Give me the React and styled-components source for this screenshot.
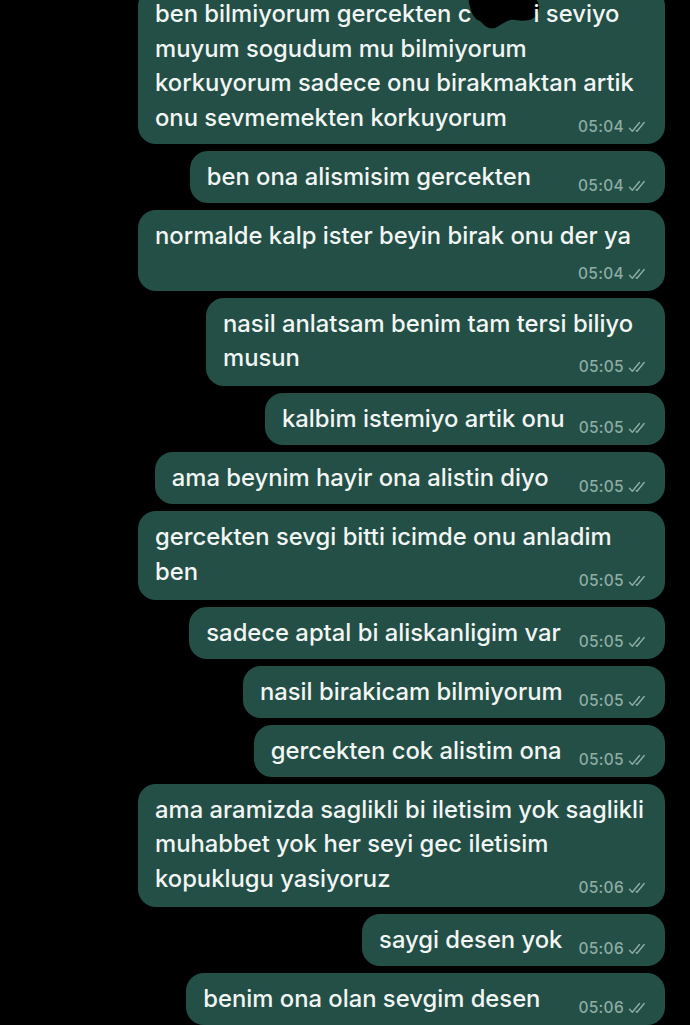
import styled, { createGlobalStyle } from "styled-components";

const GlobalStyle = createGlobalStyle`
  html, body {
    margin: 0;
    padding: 0;
    background: #000;
  }
  body {
    font-family: Inter, "Noto Sans", "Liberation Sans", sans-serif;
  }
`;

const Screen = styled.div`
  width: 690px;
  height: 1025px;
  overflow: hidden;
  background: #000;
`;

const List = styled.div`
  display: flex;
  flex-direction: column;
  align-items: flex-end;
  gap: 7px;
  margin-top: -12px;
  padding-right: 25px;
`;

const Bubble = styled.div`
  display: flow-root;
  box-sizing: border-box;
  max-width: 527px;
  width: ${(p) => (p.$w ? `${p.$w}px` : "auto")};
  padding: 9px 17px ${(p) => 8.5 + (p.$extra || 0)}px 17px;
  background: #234f46;
  border-radius: 18px;
  color: #f1f5f3;
  font-size: 23.8px;
  font-weight: 500;
  line-height: 34.5px;
  white-space: pre-line;
`;

const Meta = styled.span`
  float: right;
  display: flex;
  align-items: center;
  gap: 4px;
  margin-left: ${(p) => p.$gap || 14}px;
  margin-top: ${(p) => (p.$below ? 13 : 18)}px;
  font-size: 15.5px;
  font-weight: 500;
  line-height: 16px;
  color: #8eaca3;
  letter-spacing: 0.3px;
`;

const Redact = styled.svg`
  display: inline-block;
  vertical-align: top;
  width: 80px;
  height: 36px;
  margin: -4px -8px 0 -10px;
`;

const Ticks = () => (
  <svg width="20" height="12" viewBox="0 0 20 12" fill="none">
    <path
      d="M1.5 7.2 L4.3 10.3 L11.5 1.5"
      stroke="#8eaca3"
      strokeWidth="1.4"
      strokeLinecap="round"
      strokeLinejoin="round"
    />
    <path
      d="M8.2 9.6 L9 10.3 L16.2 1.5"
      stroke="#8eaca3"
      strokeWidth="1.4"
      strokeLinecap="round"
      strokeLinejoin="round"
    />
  </svg>
);

const Blob = () => (
  <Redact viewBox="0 0 80 36">
    <path
      d="M7 10 C5 2 16 -2 26 1 C38 -1 56 0 65 2 C76 4 79 12 76 20 C73 27 64 29 53 27 C46 26 42 30 33 35 C26 37 22 32 18 28 C11 26 9 18 7 10 Z"
      fill="#000"
    />
  </Redact>
);

const messages = [
  {
    text: (
      <>
        ben bilmiyorum gercekten c<Blob />i seviyo{"\n"}muyum sogudum mu bilmiyorum
        {"\n"}korkuyorum sadece onu birakmaktan artik{"\n"}onu sevmemekten korkuyorum
      </>
    ),
    time: "05:04",
    w: 527,
  },
  { text: "ben ona alismisim gercekten", time: "05:04", gap: 47 },
  { text: "normalde kalp ister beyin birak onu der ya", time: "05:04", w: 527, below: true },
  { text: "nasil anlatsam benim tam tersi biliyo\nmusun", time: "05:05", w: 459, extra: 2 },
  { text: "kalbim istemiyo artik onu", time: "05:05" },
  { text: "ama beynim hayir ona alistin diyo", time: "05:05", gap: 30 },
  { text: "gercekten sevgi bitti icimde onu anladim\nben", time: "05:05", w: 527, extra: 2 },
  { text: "sadece aptal bi aliskanligim var", time: "05:05", gap: 18 },
  { text: "nasil birakicam bilmiyorum", time: "05:05", gap: 16 },
  { text: "gercekten cok alistim ona", time: "05:05", gap: 17 },
  {
    text: "ama aramizda saglikli bi iletisim yok saglikli\nmuhabbet yok her seyi gec iletisim\nkopuklugu yasiyoruz",
    time: "05:06",
    w: 527,
    extra: 2,
  },
  { text: "saygi desen yok", time: "05:06", gap: 16 },
  { text: "benim ona olan sevgim desen", time: "05:06", gap: 38 },
];

const App = () => {
  return (
    <Screen>
      <GlobalStyle />
      <List>
        {messages.map((m, i) => (
          <Bubble key={i} $w={m.w} $extra={m.extra}>
            {m.text}
            <Meta $gap={m.gap} $below={m.below}>
              {m.time}
              <Ticks />
            </Meta>
          </Bubble>
        ))}
      </List>
    </Screen>
  );
};

export default App;
